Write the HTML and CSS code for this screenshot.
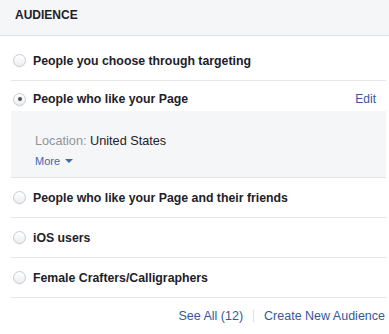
FILE: index.html
```html
<!DOCTYPE html>
<html>
<head>
<meta charset="utf-8">
<link rel="stylesheet" href="styles.css">
</head>
<body>
<div class="panel">
  <div class="header">AUDIENCE</div>
  <div class="list">
    <div class="row">
      <span class="radio"></span>
      <span class="label">People you choose through targeting</span>
    </div>
    <div class="row selected">
      <div class="row-main">
        <span class="radio checked"></span>
        <span class="label">People who like your Page</span>
        <a class="edit">Edit</a>
      </div>
      <div class="details">
        <div class="loc"><span class="muted">Location:</span> United States</div>
        <a class="more">More <span class="caret"></span></a>
      </div>
    </div>
    <div class="row">
      <span class="radio"></span>
      <span class="label">People who like your Page and their friends</span>
    </div>
    <div class="row">
      <span class="radio"></span>
      <span class="label">iOS users</span>
    </div>
    <div class="row">
      <span class="radio"></span>
      <span class="label">Female Crafters/Calligraphers</span>
    </div>
  </div>
  <div class="footer">
    <a class="link">See All (12)</a>
    <span class="sep"></span>
    <a class="link">Create New Audience</a>
  </div>
</div>
</body>
</html>
```
FILE: styles.css
```css
html, body {
  margin: 0;
  padding: 0;
  background: #fff;
}
body {
  font-family: "Liberation Sans", Helvetica, Arial, sans-serif;
  color: #1d2129;
  width: 389px;
  height: 334px;
  overflow: hidden;
}
.header {
  height: 35px;
  background: #f5f6f7;
  border-bottom: 1px solid #dddfe2;
  padding-left: 15px;
  font-size: 12px;
  font-weight: bold;
  line-height: 31px;
  color: #1d2129;
}
.list {
  margin: 0 3px 0 11px;
  padding-top: 5px;
}
.row {
  border-bottom: 1px solid #e5e6e9;
  display: flex;
  align-items: center;
  height: 39px;
}
.row.selected {
  display: block;
  height: auto;
}
.row-main {
  display: flex;
  align-items: center;
  height: 24px;
  padding-top: 6px;
  padding-right: 10px;
}
.radio {
  width: 11px;
  height: 11px;
  margin-left: 2px;
  margin-right: 7px;
  border-radius: 50%;
  border: 1px solid #c9ccd1;
  background: linear-gradient(#ffffff, #eceef1);
  box-shadow: 0 1px 0 rgba(0,0,0,0.04);
  position: relative;
  flex: none;
}
.radio.checked::after {
  content: "";
  position: absolute;
  left: 3.5px;
  top: 3.5px;
  width: 4px;
  height: 4px;
  border-radius: 50%;
  background: #4b4f56;
}
.label {
  font-size: 12.3px;
  font-weight: bold;
  color: #1d2129;
}
.edit {
  margin-left: auto;
  font-size: 12px;
  color: #365899;
}
.details {
  background: #f5f6f7;
  box-sizing: border-box;
  height: 66px;
  padding: 22px 0 0 24px;
}
.loc {
  font-size: 12.7px;
  line-height: 16px;
  color: #1d2129;
}
.muted {
  color: #90949c;
}
.more {
  display: inline-flex;
  align-items: center;
  margin-top: 5px;
  font-size: 11px;
  line-height: 14px;
  color: #4267b2;
}
.caret {
  margin-left: 5px;
  width: 0;
  height: 0;
  border-left: 4px solid transparent;
  border-right: 4px solid transparent;
  border-top: 4px solid #4267b2;
}
.footer {
  display: flex;
  justify-content: flex-end;
  align-items: center;
  height: 35px;
  padding-right: 4px;
  font-size: 12.5px;
}
.link {
  color: #365899;
}
.sep {
  width: 1px;
  height: 12px;
  background: #dddfe2;
  margin: 0 10px;
}
```
